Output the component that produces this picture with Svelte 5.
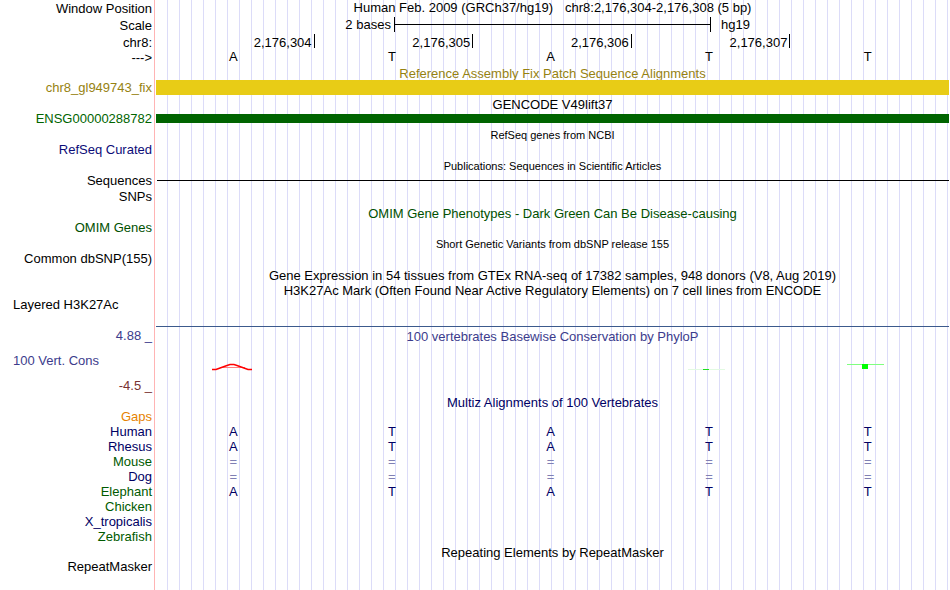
<script lang="ts">
    type Kind = "text" | "title" | "small" | "bar" | "line" | "label";

    interface Row {
        label?: string;
        text?: string;
        kind: Kind;
        tone?: string;
    }

    const ticks = ["2,176,304", "2,176,305", "2,176,306", "2,176,307", ""];
    const sequence = "ATATT";

    const tracks: Row[] = [
        { kind: "title", tone: "olive", text: "Reference Assembly Fix Patch Sequence Alignments" },
        { kind: "bar", tone: "olive", label: "chr8_gl949743_fix" },
        { kind: "title", text: "GENCODE V49lift37" },
        { kind: "bar", tone: "gene", label: "ENSG00000288782" },
        { kind: "small", text: "RefSeq genes from NCBI" },
        { kind: "label", tone: "refseq", label: "RefSeq Curated" },
        { kind: "small", text: "Publications: Sequences in Scientific Articles" },
        { kind: "line", label: "Sequences" },
        { kind: "title", label: "SNPs" },
        { kind: "title", tone: "omim", text: "OMIM Gene Phenotypes - Dark Green Can Be Disease-causing" },
        { kind: "label", tone: "omim", label: "OMIM Genes" },
        { kind: "small", text: "Short Genetic Variants from dbSNP release 155" },
        { kind: "label", label: "Common dbSNP(155)" },
        {
            kind: "title",
            text: "Gene Expression in 54 tissues from GTEx RNA-seq of 17382 samples, 948 donors (V8, Aug 2019)",
        },
        {
            kind: "text",
            text: "H3K27Ac Mark (Often Found Near Active Regulatory Elements) on 7 cell lines from ENCODE",
        },
    ];

    const species = [
        { name: "Human", tone: "navy", bases: "ATATT" },
        { name: "Rhesus", tone: "navy", bases: "ATATT" },
        { name: "Mouse", tone: "green", bases: "=====" },
        { name: "Dog", tone: "navy", bases: "=====" },
        { name: "Elephant", tone: "green", bases: "ATATT" },
        { name: "Chicken", tone: "green", bases: "" },
        { name: "X_tropicalis", tone: "navy", bases: "" },
        { name: "Zebrafish", tone: "green", bases: "" },
    ];
</script>

<main class="browser">
    <div class="row position">
        <span class="label">Window Position</span>
        <div class="plot">
            <span>Human Feb. 2009 (GRCh37/hg19)</span>
            <span>chr8:2,176,304-2,176,308 (5 bp)</span>
        </div>
    </div>
    <div class="row scale">
        <span class="label">Scale</span>
        <div class="plot">
            <span class="scale-size">2 bases</span>
            <div class="scale-bar"></div>
            <span class="scale-db">hg19</span>
        </div>
    </div>
    <div class="row ruler">
        <span class="label">chr8:</span>
        <div class="plot">
            {#each ticks as tick}
                <span class:tick>{tick}</span>
            {/each}
        </div>
    </div>
    <div class="row sequence">
        <span class="label">---&gt;</span>
        <div class="plot bases">
            {#each sequence as base}
                <span>{base}</span>
            {/each}
        </div>
    </div>

    {#each tracks as row}
        <div class="row {row.kind} {row.tone ?? ''}">
            <span class="label">{row.label ?? ""}</span>
            <div class="plot">
                {#if row.kind === "bar" || row.kind === "line"}
                    <div class="item"></div>
                {:else}
                    {row.text ?? ""}
                {/if}
            </div>
        </div>
    {/each}

    <div class="row signal">
        <span class="label left">Layered H3K27Ac</span>
        <div class="plot"></div>
    </div>

    <div class="row text cons">
        <span class="label">4.88 _</span>
        <div class="plot">100 vertebrates Basewise Conservation by PhyloP</div>
    </div>
    <div class="row wiggle cons">
        <span class="label left">100 Vert. Cons</span>
        <div class="plot bases">
            <svg viewBox="0 0 42 34">
                <path d="M8 23.5H33" stroke="#ff8080" stroke-width="1" />
                <path
                    d="M0 25.5H4L15 21.5L18 20.5H22L25 21.5L36 25.5H40"
                    fill="none"
                    stroke="#ff0000"
                    stroke-width="1.5"
                />
            </svg>
            <span></span>
            <span></span>
            <svg viewBox="0 0 42 34" shape-rendering="crispEdges">
                <path d="M0 25.5H37" stroke="#e2fae2" />
                <path d="M15 25.5H21" stroke="#1ee01e" />
            </svg>
            <svg viewBox="0 0 42 34" shape-rendering="crispEdges">
                <path d="M0 20.5H37" stroke="#80ff80" />
                <rect x="15" y="20" width="6" height="5" fill="#00ff00" />
            </svg>
        </div>
    </div>
    <div class="row negative">
        <span class="label">-4.5 _</span>
        <div class="plot"></div>
    </div>

    <div class="row title navy">
        <span class="label"></span>
        <div class="plot">Multiz Alignments of 100 Vertebrates</div>
    </div>
    <div class="row gaps">
        <span class="label">Gaps</span>
        <div class="plot"></div>
    </div>
    {#each species as { name, tone, bases }}
        <div class="row {tone}">
            <span class="label">{name}</span>
            <div class="plot bases navy">
                {#each bases as base}
                    <span class:match={base === "="}>{base}</span>
                {/each}
            </div>
        </div>
    {/each}
    <div class="row text">
        <span class="label"></span>
        <div class="plot">Repeating Elements by RepeatMasker</div>
    </div>
    <div class="row">
        <span class="label">RepeatMasker</span>
        <div class="plot"></div>
    </div>
</main>

<style>
    :global(body) {
        margin: 0;
        background: #fff;
    }

    .browser {
        box-sizing: border-box;
        min-height: 100vh;
        padding-right: 1px;
        font-family: "Liberation Sans", Arial, sans-serif;
        font-size: 13px;
        line-height: 15px;
        color: #000;
        /* window edge, then the guide lines every 12px */
        background:
            linear-gradient(#ffb4b4, #ffb4b4) 154px 0 / 1px 100% no-repeat,
            repeating-linear-gradient(
                    to right,
                    transparent 0 11px,
                    #dcdcf8 11px 12px
                )
                156px 0 no-repeat;
    }

    .row {
        display: grid;
        grid-template-columns: 152px minmax(0, 1fr);
        column-gap: 4px;
        height: 15px;
        white-space: nowrap;
    }
    .label {
        text-align: right;
    }
    .label.left {
        text-align: left;
        padding-left: 13px;
    }
    .plot {
        text-align: center;
    }

    .position {
        height: 17px;
    }
    .position .label {
        padding-top: 1px;
    }
    .position .plot {
        display: flex;
        justify-content: center;
        gap: 12px;
    }

    .scale {
        height: 17px;
    }
    .scale .plot {
        display: grid;
        grid-template-columns: 3fr 4fr 3fr;
    }
    .scale .label {
        padding-top: 1px;
    }
    .scale-size {
        padding-right: 3px;
        text-align: right;
    }
    .scale-db {
        padding-left: 10px;
        text-align: left;
    }
    .scale-bar {
        height: 15px;
        border: solid #000;
        border-width: 0 1px;
        background: linear-gradient(#000, #000) 0 7px / 100% 1px no-repeat;
    }

    .ruler .plot {
        display: grid;
        grid-template-columns: repeat(5, 1fr);
        line-height: 17px;
        text-align: right;
    }
    .ruler .label,
    .sequence .label {
        padding-top: 1px;
    }
    .tick {
        height: 14px;
        padding-right: 2px;
        border-right: 1px solid #000;
    }

    .sequence {
        height: 16px;
    }

    .bases {
        display: grid;
        grid-template-columns: repeat(5, 1fr);
        margin: 0 2px 0 -2px;
        justify-items: center;
    }

    .title,
    .small {
        height: 16px;
        line-height: 18px;
    }
    .title .plot {
        line-height: 20px;
    }
    .text .plot {
        line-height: 17px;
    }
    .small {
        font-size: 11px;
    }

    .bar .plot,
    .line .plot {
        display: flex;
        align-items: center;
    }
    .bar .item {
        flex: 1;
        height: 9px;
        background: #006400;
    }
    .bar.olive .item {
        height: 15px;
        background: #e8cc16;
    }
    .line .item {
        flex: 1;
        height: 1px;
        margin-left: 1px;
        background: #000;
    }

    .olive {
        color: #968211;
    }
    .olive.title {
        height: 15px;
    }
    .olive.title .plot {
        line-height: 17px;
    }
    .gene {
        color: #006400;
    }
    .refseq {
        color: #0c0c78;
    }
    .omim {
        color: #005000;
    }
    .navy {
        color: #000064;
    }
    .green {
        color: #005a00;
    }
    .gaps {
        color: #e68200;
    }
    .match {
        color: #8080b4;
    }

    .signal {
        height: 31px;
    }
    .signal .plot {
        box-sizing: border-box;
        height: 30px;
        border-bottom: 1px solid #3c5a8c;
    }

    .cons {
        color: #3c3c8c;
    }
    .wiggle {
        height: 35px;
    }
    .wiggle .label {
        padding-top: 10px;
    }
    .wiggle svg {
        width: 42px;
        height: 34px;
        margin-top: 1px;
    }
    .negative {
        color: #783232;
    }
</style>
